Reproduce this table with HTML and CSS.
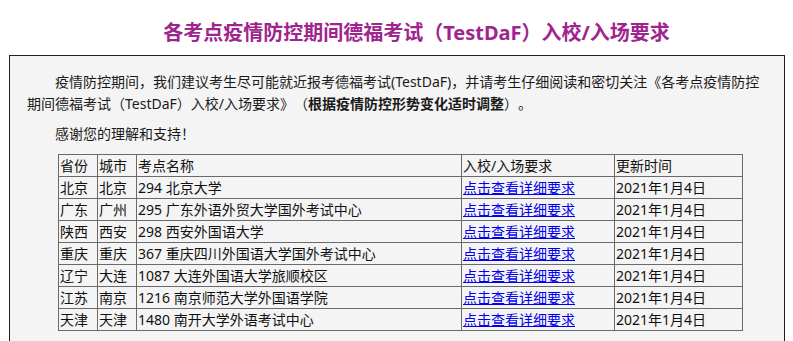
FILE: index.html
```html
<!DOCTYPE html>
<html lang="zh-CN">
<head>
<meta charset="utf-8">
<title>各考点疫情防控期间德福考试（TestDaF）入校/入场要求</title>
<link rel="stylesheet" href="styles.css">
</head>
<body>
<h1 class="title">各考点疫情防控期间德福考试（TestDaF）入校/入场要求</h1>
<div class="box">
  <p class="para">疫情防控期间，我们建议考生尽可能就近报考德福考试(TestDaF)，并请考生仔细阅读和密切关注《各考点疫情防控期间德福考试（TestDaF）入校/入场要求》（<strong>根据疫情防控形势变化适时调整</strong>）。</p>
  <p class="para thanks">感谢您的理解和支持！</p>
  <table class="sites">
    <colgroup>
      <col class="c-prov"><col class="c-city"><col class="c-name"><col class="c-req"><col class="c-date">
    </colgroup>
    <tr><td>省份</td><td>城市</td><td>考点名称</td><td>入校/入场要求</td><td>更新时间</td></tr>
    <tr><td>北京</td><td>北京</td><td>294 北京大学</td><td><a href="#">点击查看详细要求</a></td><td>2021年1月4日</td></tr>
    <tr><td>广东</td><td>广州</td><td>295 广东外语外贸大学国外考试中心</td><td><a href="#">点击查看详细要求</a></td><td>2021年1月4日</td></tr>
    <tr><td>陕西</td><td>西安</td><td>298 西安外国语大学</td><td><a href="#">点击查看详细要求</a></td><td>2021年1月4日</td></tr>
    <tr><td>重庆</td><td>重庆</td><td>367 重庆四川外国语大学国外考试中心</td><td><a href="#">点击查看详细要求</a></td><td>2021年1月4日</td></tr>
    <tr><td>辽宁</td><td>大连</td><td>1087 大连外国语大学旅顺校区</td><td><a href="#">点击查看详细要求</a></td><td>2021年1月4日</td></tr>
    <tr><td>江苏</td><td>南京</td><td>1216 南京师范大学外国语学院</td><td><a href="#">点击查看详细要求</a></td><td>2021年1月4日</td></tr>
    <tr><td>天津</td><td>天津</td><td>1480 南开大学外语考试中心</td><td><a href="#">点击查看详细要求</a></td><td>2021年1月4日</td></tr>
  </table>
</div>
</body>
</html>
```
FILE: styles.css
```css
html, body {
  margin: 0;
  padding: 0;
  background: #ffffff;
}
body {
  font-family: "Noto Sans", "Noto Sans CJK SC", sans-serif;
  font-size: 14px;
  color: #1a1a1a;
  text-spacing-trim: space-all;
}
.title {
  margin: 0 0 7px 0;
  padding: 18px 0 0 40px;
  text-align: center;
  font-size: 20px;
  line-height: 30px;
  font-weight: bold;
  color: #a0248e;
}
.box {
  margin: 0 8px 0 9px;
  border: 1px solid #1e1e1e;
  background: #f4f4f4;
  padding: 15px 17px 40px 17px;
}
.para {
  margin: 0;
  line-height: 22px;
  text-indent: 2em;
}
.para strong {
  font-weight: bold;
}
.thanks {
  margin-top: 8px;
}
.sites {
  margin: 9px 0 0 31px;
  border-collapse: collapse;
  table-layout: fixed;
  width: 685px;
  border: 1px solid #333333;
}
.c-prov { width: 39px; }
.c-city { width: 39px; }
.c-name { width: 325px; }
.c-req { width: 153px; }
.c-date { width: 128px; }
.sites td {
  border: 1px solid #6a6a6a;
  padding: 0 1px;
  height: 21px;
  line-height: 21px;
  white-space: nowrap;
  overflow: hidden;
  color: #111111;
}
.sites a {
  color: #0000ee;
  text-decoration: underline;
}
```
